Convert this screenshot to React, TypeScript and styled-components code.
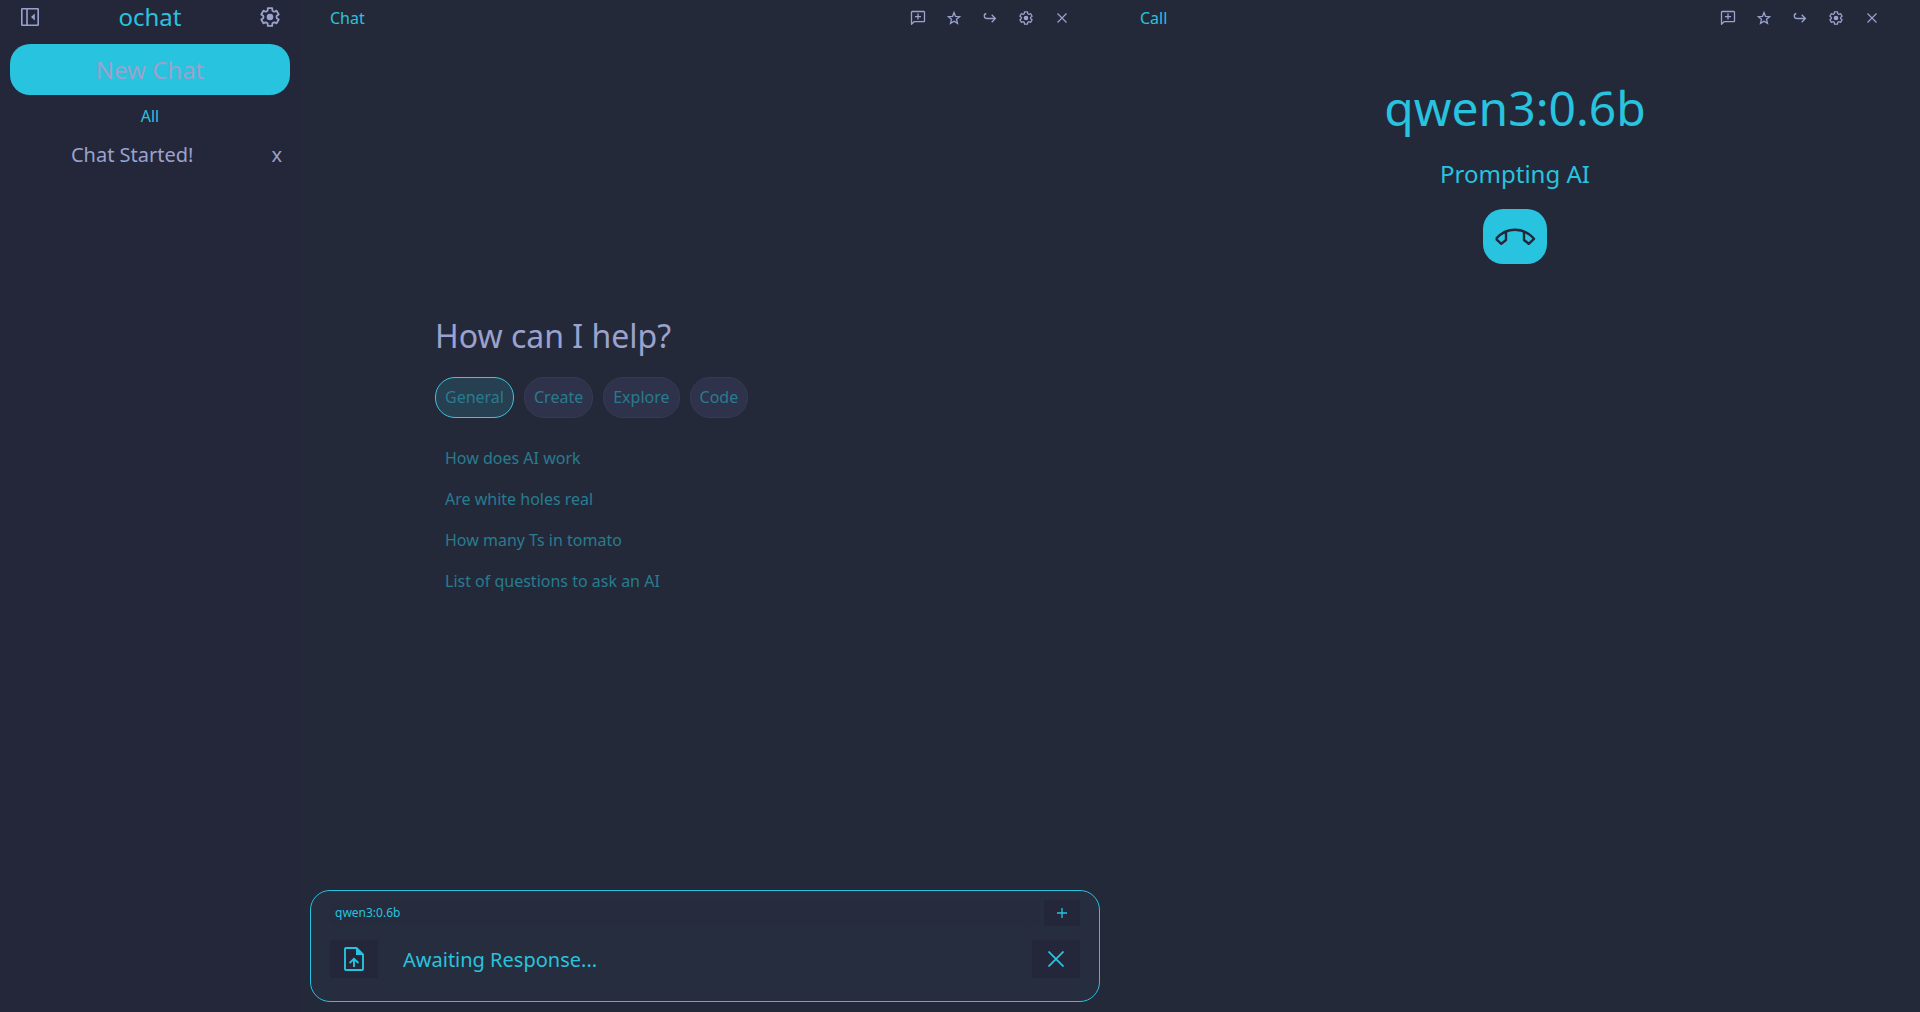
import React, { useState } from "react";
import styled, { createGlobalStyle } from "styled-components";

const color = {
  side: "#242739",
  main: "#24293a",
  accent: "#28c3de",
  dim: "#287c8f",
  text: "#9aa2cd",
  field: "#252d3f",
  chip: "#2e324b",
  chipLine: "#363a54",
};

const GlobalStyle = createGlobalStyle`
  *, *::before, *::after { box-sizing: border-box; }
  body { margin: 0; background: ${color.main}; }
  button, input {
    font: inherit; color: inherit; margin: 0; padding: 0;
    border: 0; background: none; outline: none;
  }
  button { cursor: pointer; }
  svg { display: block; }
`;

const Shell = styled.div`
  display: grid;
  grid-template-columns: 300px 1fr 1fr;
  min-height: 100vh;
  font: 400 16px/21px "Noto Sans", sans-serif;
  color: ${color.accent};
  background: ${color.main};
`;

const Sidebar = styled.aside`
  display: flex;
  flex-direction: column;
  background: ${color.side};
`;

const SideHeader = styled.header`
  display: flex;
  align-items: center;
  justify-content: space-between;
  height: 34px;
  padding: 0 20px;
  color: ${color.text};
`;

const Brand = styled.h1`
  margin: 0;
  font-size: 24px;
  font-weight: 400;
  line-height: 30px;
  color: ${color.accent};
`;

const NewChat = styled.button`
  margin: 10px;
  padding: 10px;
  border-radius: 20px;
  background: ${color.accent};
  color: ${color.text};
  font-size: 24px;
  line-height: 31px;
`;

const GroupLabel = styled.h2`
  margin: 0 0 5px;
  font-size: 16px;
  font-weight: 400;
  line-height: 22px;
  text-align: center;
`;

const ChatRow = styled.div`
  display: flex;
  gap: 5px;
  padding: 0 8px;
  color: ${color.text};
  font-size: 20px;
  line-height: 26px;
`;

const RowButton = styled.button<{ $grow?: boolean }>`
  flex: ${(p) => (p.$grow ? 1 : "none")};
  padding: 10px;
`;

const Panel = styled.section`
  display: flex;
  flex-direction: column;
  min-width: 0;
`;

const PanelHeader = styled.header`
  display: flex;
  align-items: center;
  justify-content: space-between;
  height: 36px;
  padding: 0 30px;
`;

const PanelTitle = styled.h2`
  margin: 0;
  font-size: 16px;
  font-weight: 400;
`;

const Tools = styled.div`
  display: flex;
  color: ${color.text};
`;

const ToolButton = styled.button`
  display: grid;
  place-items: center;
  width: 36px;
  height: 36px;
`;

const Welcome = styled.div`
  flex: 1;
  display: grid;
  grid-template-columns: 1fr 4fr 1fr;
  align-items: center;
`;

const WelcomeBody = styled.div`
  grid-column: 2;
  display: flex;
  flex-direction: column;
  gap: 20px;
`;

const Question = styled.h3`
  margin: 0;
  font-size: 32px;
  font-weight: 400;
  line-height: 42px;
  color: ${color.text};
`;

const Topics = styled.div`
  display: flex;
  gap: 10px;
`;

const Topic = styled.button<{ $active: boolean }>`
  height: 41px;
  padding: 0 9px;
  border-radius: 20px;
  border: 1px solid ${(p) => (p.$active ? "#3fc4d8" : color.chipLine)};
  background: ${(p) => (p.$active ? "#263f51" : color.chip)};
  color: ${color.dim};
`;

const Suggestions = styled.div`
  display: flex;
  flex-direction: column;
  align-items: flex-start;
`;

const Suggestion = styled.button`
  padding: 10px;
  color: ${color.dim};
`;

const Composer = styled.form`
  margin: 10px;
  padding: 9px 19px;
  border: 1px solid ${color.accent};
  border-radius: 20px;
  background: ${color.field};
`;

const ModelRow = styled.div`
  display: flex;
  gap: 4px;
  font-size: 12px;
  line-height: 16px;
`;

const ModelButton = styled.button`
  flex: 1;
  padding: 5px;
  border-radius: 10px;
  background: #262b3e;
  text-align: left;
`;

const PromptRow = styled.div`
  display: flex;
  align-items: center;
  gap: 5px;
  height: 66px;
`;

const Square = styled.button<{ $small?: boolean }>`
  flex: none;
  display: grid;
  place-items: center;
  width: ${(p) => (p.$small ? 36 : 48)}px;
  height: ${(p) => (p.$small ? 26 : 38)}px;
  background: ${color.side};
`;

const Prompt = styled.input`
  flex: 1;
  min-width: 0;
  padding: 2px 20px 0;
  font-size: 20px;
  line-height: 26px;
  &::placeholder { color: ${color.accent}; opacity: 1; }
`;

const CallBody = styled.div`
  display: flex;
  flex-direction: column;
  align-items: center;
  gap: 20px;
  padding-top: 40px;
`;

const CallModel = styled.h3`
  margin: 0;
  font-size: 48px;
  font-weight: 400;
  line-height: 63px;
`;

const CallStatus = styled.p`
  margin: 0;
  font-size: 24px;
  line-height: 30px;
`;

const HangUp = styled.button`
  display: grid;
  place-items: center;
  width: 64px;
  height: 55px;
  border-radius: 20px;
  background: ${color.accent};
  color: ${color.side};
`;

/* Six-toothed cog outline around the centre of a 20 by 20 box. */
const cogPoints = Array.from({ length: 6 }, (_, tooth) =>
  [
    [-30, 6.5],
    [-20, 6.9],
    [-14, 9.1],
    [14, 9.1],
    [20, 6.9],
  ].map(([offset, radius]) => {
    const angle = ((tooth * 60 + offset - 90) * Math.PI) / 180;
    return `${(10 + radius * Math.cos(angle)).toFixed(2)},${(10 + radius * Math.sin(angle)).toFixed(2)}`;
  }),
)
  .flat()
  .join(" ");

const CogIcon = ({ size }: { size: number }) => (
  <svg width={size} height={size} viewBox="0 0 20 20" aria-hidden="true">
    <polygon points={cogPoints} fill="none" stroke="currentColor" strokeWidth="1.8" strokeLinejoin="round" />
    <circle cx="10" cy="10" r="3.3" fill="currentColor" />
  </svg>
);

const CollapseIcon = () => (
  <svg width="20" height="20" viewBox="0 0 20 20" fill="none" stroke="currentColor" strokeWidth="1.6" aria-hidden="true">
    <rect x="1.8" y="1.8" width="16.4" height="16.4" rx="0.5" />
    <path d="M7 2v16" />
    <path d="M14.8 6.6v6.8L11 10z" fill="currentColor" stroke="none" />
  </svg>
);

const CommentIcon = () => (
  <svg width="16" height="16" viewBox="0 0 16 16" fill="none" stroke="currentColor" strokeWidth="1.3" aria-hidden="true">
    <path d="M1.5 14.2V2.2a.7.7 0 0 1 .7-.7h11.6a.7.7 0 0 1 .7.7v8.8a.7.7 0 0 1-.7.7H4z" strokeLinejoin="round" />
    <path d="M8 3.6v6M5 6.6h6" />
  </svg>
);

const StarIcon = () => (
  <svg width="16" height="16" viewBox="0 0 16 16" fill="none" stroke="currentColor" strokeWidth="1.3" aria-hidden="true">
    <path d="M8 2.5l1.5 3.9 4.1.3-3.1 2.6 1 4.1L8 11.2l-3.5 2.2 1-4.1-3.100-2.600 4.100-.3z" />
  </svg>
);

const ForwardIcon = () => (
  <svg width="16" height="16" viewBox="0 0 16 16" fill="none" stroke="currentColor" strokeWidth="1.3" aria-hidden="true">
    <path d="M4.3 3.5C1.5 4 1.5 8.5 5 8.5h8.3M9.7 4.8l3.7 3.7-3.7 3.7" />
  </svg>
);

const CrossIcon = ({ size, weight }: { size: number; weight: number }) => (
  <svg width={size} height={size} viewBox={`0 0 ${size} ${size}`} stroke="currentColor" strokeWidth={weight} aria-hidden="true">
    <path d={`M.5.5L${size - 0.5} ${size - 0.5}M${size - 0.5}.5L.5 ${size - 0.5}`} />
  </svg>
);

const PlusIcon = () => (
  <svg width="10" height="10" viewBox="0 0 10 10" stroke="currentColor" strokeWidth="1.3" aria-hidden="true">
    <path d="M5 0v10M0 5h10" />
  </svg>
);

const UploadIcon = () => (
  <svg width="20" height="24" viewBox="0 0 20 24" fill="none" stroke="currentColor" strokeWidth="1.9" aria-hidden="true">
    <path d="M12.5 1H2a1 1 0 0 0-1 1v20a1 1 0 0 0 1 1h16a1 1 0 0 0 1-1V7.5z" />
    <path d="M12 .5v7.5h7.5z" fill="currentColor" stroke="none" />
    <path d="M10 20v-8M5.6 16L10 11.8l4.400 4.200" />
  </svg>
);

const HangUpIcon = () => (
  <svg width="42" height="18" viewBox="0 0 42 18" fill="none" stroke="currentColor" strokeWidth="2.4" strokeLinejoin="round" aria-hidden="true">
    <path d="M2 10.8C12.5-1.2 29.5-1.2 40 10.8l-5.300 5L30 12V4.500M12 4.500V12l-4.700 3.800-5.300-5" />
  </svg>
);

function PanelBar({ title }: { title: string }) {
  return (
    <PanelHeader>
      <PanelTitle>{title}</PanelTitle>
      <Tools>
        <ToolButton aria-label="New conversation"><CommentIcon /></ToolButton>
        <ToolButton aria-label="Favourite"><StarIcon /></ToolButton>
        <ToolButton aria-label="Forward"><ForwardIcon /></ToolButton>
        <ToolButton aria-label="Panel options"><CogIcon size={14} /></ToolButton>
        <ToolButton aria-label="Close panel"><CrossIcon size={10} weight={1.2} /></ToolButton>
      </Tools>
    </PanelHeader>
  );
}

const topics = ["General", "Create", "Explore", "Code"];
const suggestions = [
  "How does AI work",
  "Are white holes real",
  "How many Ts in tomato",
  "List of questions to ask an AI",
];

export default function App() {
  const [topic, setTopic] = useState("General");
  return (
    <>
      <GlobalStyle />
      <Shell>
        <Sidebar>
          <SideHeader>
            <button aria-label="Collapse sidebar"><CollapseIcon /></button>
            <Brand>ochat</Brand>
            <button aria-label="Settings"><CogIcon size={20} /></button>
          </SideHeader>
          <NewChat>New Chat</NewChat>
          <GroupLabel>All</GroupLabel>
          <ChatRow>
            <RowButton $grow>Chat Started!</RowButton>
            <RowButton aria-label="Delete chat">x</RowButton>
          </ChatRow>
        </Sidebar>

        <Panel>
          <PanelBar title="Chat" />
          <Welcome>
            <WelcomeBody>
              <Question>How can I help?</Question>
              <Topics>
                {topics.map((name) => (
                  <Topic key={name} $active={name === topic} onClick={() => setTopic(name)}>
                    {name}
                  </Topic>
                ))}
              </Topics>
              <Suggestions>
                {suggestions.map((line) => (
                  <Suggestion key={line}>{line}</Suggestion>
                ))}
              </Suggestions>
            </WelcomeBody>
          </Welcome>
          <Composer onSubmit={(e) => e.preventDefault()}>
            <ModelRow>
              <ModelButton type="button">qwen3:0.6b</ModelButton>
              <Square $small type="button" aria-label="Add model"><PlusIcon /></Square>
            </ModelRow>
            <PromptRow>
              <Square type="button" aria-label="Attach file"><UploadIcon /></Square>
              <Prompt aria-label="Message" placeholder="Awaiting Response..." />
              <Square type="button" aria-label="Cancel"><CrossIcon size={16} weight={1.8} /></Square>
            </PromptRow>
          </Composer>
        </Panel>

        <Panel>
          <PanelBar title="Call" />
          <CallBody>
            <CallModel>qwen3:0.6b</CallModel>
            <CallStatus>Prompting AI</CallStatus>
            <HangUp aria-label="Hang up"><HangUpIcon /></HangUp>
          </CallBody>
        </Panel>
      </Shell>
    </>
  );
}
